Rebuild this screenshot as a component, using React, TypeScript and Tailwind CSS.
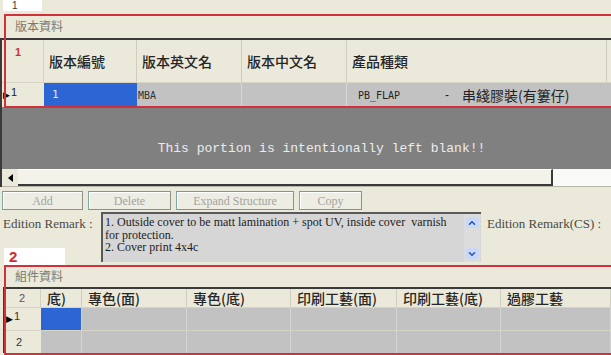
import { ChevronDown, ChevronUp } from "lucide-react";

const cjk = "font-['Noto_Sans_CJK_TC','Noto_Sans',sans-serif]";
const serif = "font-['Liberation_Serif',serif]";

const edCols = [
  { label: "版本編號", w: "w-[93px]" },
  { label: "版本英文名", w: "w-[105px]" },
  { label: "版本中文名", w: "w-[105px]" },
  { label: "產品種類", w: "w-[260px]" },
];

const partCols = [
  { label: "底)", w: "w-[41px]" },
  { label: "專色(面)", w: "w-[105px]" },
  { label: "專色(底)", w: "w-[104px]" },
  { label: "印刷工藝(面)", w: "w-[106px]" },
  { label: "印刷工藝(底)", w: "w-[104px]" },
  { label: "過膠工藝", w: "w-[110px]" },
];

function Arrow() {
  return <span className="text-[9px] leading-none text-black mr-[1px]">▶</span>;
}

export default function App() {
  return (
    <div className="relative w-[611px] h-[355px] overflow-hidden bg-[#ebe9da] font-['Liberation_Sans',sans-serif]">
      {/* tag 1 */}
      <div className="h-[15px] pl-[3px]">
        <div className="w-[39px] h-[11px] bg-white text-[10px] leading-[12px] pl-[9px] text-[#333]">1</div>
      </div>

      {/* edition section */}
      <div className={`h-[23px] pl-[15px] text-[12px] leading-[22px] text-[#7a7a72] ${cjk}`}>版本資料</div>
      <div className="border-l-2 border-t-2 border-[#3a3a3a]">
        <div className="flex h-[42px]">
          <div className="w-[42px] border-r border-[#d2d0c2] pl-[13px] pt-[4px] text-[11px] font-bold text-[#d03038]">1</div>
          {edCols.map((c) => (
            <div
              key={c.label}
              className={`${c.w} shrink-0 flex items-center pl-[5px] border-r border-[#cfcdbf] text-[14px] text-[#262626] font-medium ${cjk}`}
            >
              {c.label}
            </div>
          ))}
          <div className="flex-1" />
        </div>
        <div className="flex h-[25px] border-t border-[#d6d4c6]">
          <div className="w-[42px] flex items-center pl-[1px] text-[11px] text-[#222]">
            <Arrow />
            <span className="-mt-[6px]">1</span>
          </div>
          <div className="w-[93px] bg-[#2c66d4] pl-[8px] flex items-center text-[11px] text-[#dfe8ff] font-['DejaVu_Sans_Mono',monospace]">1</div>
          <div className="w-[105px] bg-[#c2c2c2] border-r border-[#d8d8d8] pl-[1px] flex items-center text-[10px] text-[#333] font-['DejaVu_Sans_Mono',monospace]">MBA</div>
          <div className="w-[105px] bg-[#c2c2c2] border-r border-[#d8d8d8]" />
          <div className="w-[260px] bg-[#c2c2c2] flex items-center pl-[11px] text-[#222]">
            <span className="w-[87px] text-[10px] font-['DejaVu_Sans_Mono',monospace]">PB_FLAP</span>
            <span className="text-[12px] w-[17px]">-</span>
            <span className={`text-[14px] ${cjk}`}>串綫膠裝(有簍仔)</span>
          </div>
          <div className="flex-1 bg-[#c2c2c2]" />
        </div>
        <div className="h-[62px] bg-[#808080] flex items-center justify-center pt-[22px] pl-[30px] text-[13px] text-[#ececec] font-['Liberation_Mono',monospace]">
          This portion is intentionally left blank!!
        </div>
        <div className="flex h-[18px] border-b border-[#b8b6a8]">
          <div className="w-[16px] flex items-center justify-center bg-[#ebe9da]">
            <div className="w-0 h-0 border-y-[4px] border-y-transparent border-r-[5px] border-r-black" />
          </div>
          <div className="w-[535px] bg-[#f4f3ea] border-r-2 border-b-2 border-[#3a3a3a] border-t border-t-white" />
          <div className="flex-1 bg-[#f9f9f7]" />
        </div>
      </div>

      {/* buttons */}
      <div className={`flex gap-[5px] mt-[4px] pl-[2px] h-[19px] text-[12px] text-[#a3a39b] ${serif}`}>
        {[
          { t: "Add", w: "w-[81px]" },
          { t: "Delete", w: "w-[83px]" },
          { t: "Expand Structure", w: "w-[118px]" },
          { t: "Copy", w: "w-[63px]" },
        ].map((b) => (
          <div
            key={b.t}
            className={`${b.w} flex items-center justify-center border border-[#8f8f88] border-l-[#7fa8a0] bg-[#eeede4] shadow-[inset_1px_1px_0_#ffffff]`}
          >
            {b.t}
          </div>
        ))}
      </div>

      {/* remark row */}
      <div className="flex h-[53px] mt-[2px]">
        <div className="w-[101px] flex flex-col justify-between">
          <div className={`pl-[3px] pt-[2px] text-[13px] text-[#4a4a44] ${serif}`}>Edition Remark :</div>
          <div className="ml-[4px] w-[61px] h-[17px] bg-white pl-[5px] text-[15px] leading-[17px] font-bold text-[#d8262e]">2</div>
        </div>
        <div className="w-[380px] h-[50px] flex bg-[#d6d6d6] border-t-2 border-l-2 border-[#5a5a5a]">
          <div className={`flex-1 pl-[2px] pt-[2px] text-[12px] leading-[12.5px] text-[#1c1c1c] ${serif}`}>
            <div>1. Outside cover to be matt lamination + spot UV, inside cover&nbsp; varnish</div>
            <div>for protection.</div>
            <div>2. Cover print 4x4c</div>
          </div>
          <div className="w-[16px] flex flex-col justify-between items-center py-[3px] mr-[1px] bg-[#dcdcdc]">
            <div className="w-[13px] h-[11px] bg-[#c9d8f6] rounded-[2px] flex items-center justify-center">
              <ChevronUp size={10} strokeWidth={3.5} className="text-[#2b4fa8]" />
            </div>
            <div className="w-[13px] h-[11px] bg-[#c9d8f6] rounded-[2px] flex items-center justify-center">
              <ChevronDown size={10} strokeWidth={3.5} className="text-[#2b4fa8]" />
            </div>
          </div>
        </div>
        <div className={`pl-[6px] pt-[2px] text-[13px] text-[#4a4a44] ${serif}`}>Edition Remark(CS) :</div>
      </div>

      {/* parts section */}
      <div className={`h-[22px] pl-[15px] text-[12px] leading-[18px] pt-[2px] text-[#7a7a72] ${cjk}`}>組件資料</div>
      <div className="ml-[3px] border-l-2 border-t-2 border-[#3a3a3a]">
        <div className="flex h-[18px]">
          <div className="w-[42px] border-r border-[#d2d0c2] pl-[14px] flex items-center text-[11px] text-[#555]">2</div>
          {partCols.map((c) => (
            <div
              key={c.label}
              className={`${c.w} shrink-0 flex items-center pl-[6px] border-r border-[#cfcdbf] text-[14px] leading-none text-[#262626] font-medium ${cjk}`}
            >
              {c.label}
            </div>
          ))}
        </div>
        {[0, 1].map((r) => (
          <div key={r} className="flex h-[23px] border-t border-[#d6d4c6]">
            <div className="w-[42px] flex items-center pl-[1px] text-[11px] text-[#333]">
              {r === 0 ? (
                <>
                  <Arrow />
                  <span className="-mt-[6px]">1</span>
                </>
              ) : (
                <span className="pl-[10px]">2</span>
              )}
            </div>
            {partCols.map((c, i) => (
              <div
                key={c.label}
                className={`${c.w} shrink-0 border-r border-[#d4d4d4] ${
                  r === 0 && i === 0 ? "bg-[#2c66d4]" : "bg-[#c2c2c2]"
                }`}
              />
            ))}
          </div>
        ))}
      </div>

      {/* red annotation frames */}
      <div className="absolute left-[4px] top-[14px] w-[620px] h-[94px] border-2 border-[#d2303a] pointer-events-none" />
      <div className="absolute left-[4px] top-[265px] w-[620px] h-[90px] border-2 border-[#d2303a] pointer-events-none" />
    </div>
  );
}
